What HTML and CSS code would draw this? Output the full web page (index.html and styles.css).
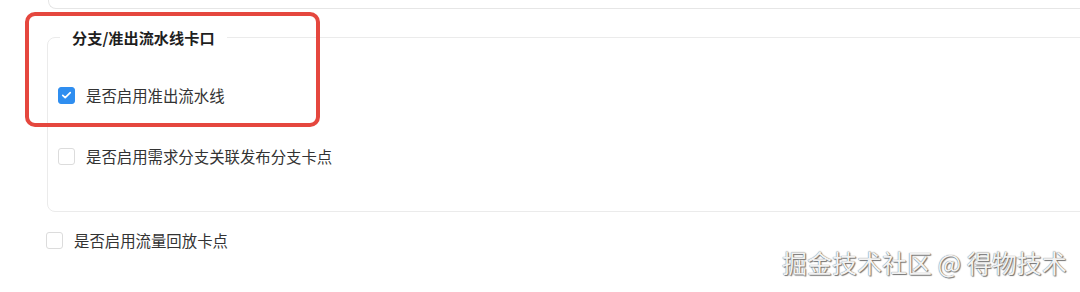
FILE: index.html
```html
<!DOCTYPE html>
<html lang="zh-CN">
<head>
<meta charset="utf-8">
<link rel="stylesheet" href="styles.css">
</head>
<body>
<div class="page">
  <div class="prev-card"></div>
  <fieldset class="group">
    <legend class="group-title">分支/准出流水线卡口</legend>
    <div class="group-body">
      <label class="check-row">
        <span class="box checked">
          <svg viewBox="0 0 16 16" width="16" height="16"><path d="M4 8.3l2.6 2.5L12 5.4" fill="none" stroke="#fff" stroke-width="1.8" stroke-linecap="round" stroke-linejoin="round"/></svg>
        </span>
        <span class="label">是否启用准出流水线</span>
      </label>
      <label class="check-row">
        <span class="box"></span>
        <span class="label">是否启用需求分支关联发布分支卡点</span>
      </label>
    </div>
  </fieldset>
  <label class="check-row outer-row">
    <span class="box"></span>
    <span class="label">是否启用流量回放卡点</span>
  </label>
  <div class="highlight"></div>
  <div class="watermark">掘金技术社区 @ 得物技术</div>
</div>
</body>
</html>
```

FILE: styles.css
```css
html, body {
  margin: 0;
  padding: 0;
  background: #fff;
}
.page {
  position: relative;
  width: 1080px;
  height: 292px;
  overflow: hidden;
  font-family: "Noto Sans CJK SC", "Noto Sans", sans-serif;
  color: #333;
}
.prev-card {
  margin-left: 48px;
  margin-right: -20px;
  height: 9px;
  box-sizing: border-box;
  border: 1px solid #e6e6e6;
  border-top: 0;
  border-right: 0;
  border-bottom-left-radius: 8px;
}
.group {
  margin: 17px -20px 0 47px;
  padding: 0;
  border: 1px solid #ebebeb;
  border-radius: 8px;
}
.group-title {
  margin-left: 12px;
  padding: 0 12px;
  font-size: 15.2px;
  line-height: 22px;
  font-weight: 700;
  color: #1f1f1f;
}
.group-body {
  display: flex;
  flex-direction: column;
  gap: 39px;
  padding: 36px 0 44px 10px;
}
.check-row {
  display: flex;
  align-items: center;
  gap: 11px;
  height: 22px;
  font-size: 15.4px;
  line-height: 22px;
}
.outer-row {
  margin-top: 17px;
  padding-left: 46px;
}
.box {
  width: 17px;
  height: 17px;
  box-sizing: border-box;
  border: 1px solid #dcdcdc;
  border-radius: 3px;
  background: #fff;
  display: flex;
  align-items: center;
  justify-content: center;
}
.box.checked {
  background: #2f8ef0;
  border-color: #2f8ef0;
}
.label {
  color: #333;
}
.highlight {
  position: absolute;
  left: 25px;
  top: 12px;
  width: 295px;
  height: 115px;
  box-sizing: border-box;
  border: 4px solid #e5473e;
  border-radius: 10px;
}
.watermark {
  position: absolute;
  left: 782px;
  top: 247px;
  font-size: 25px;
  line-height: 30px;
  white-space: nowrap;
  color: #f2f2f2;
  text-shadow: 0 0 1px #555, 1px 1px 1px #777;
}
```
